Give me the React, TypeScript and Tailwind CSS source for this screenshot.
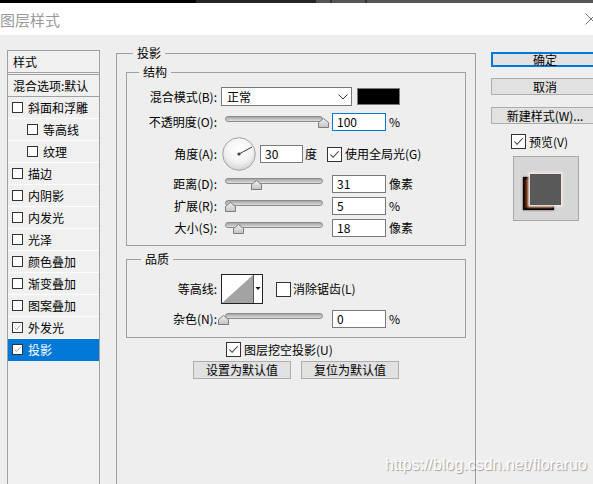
import type { ReactNode } from "react";

const items = [
  { label: "斜面和浮雕" },
  { label: "等高线", indent: true },
  { label: "纹理", indent: true },
  { label: "描边" },
  { label: "内阴影" },
  { label: "内发光" },
  { label: "光泽" },
  { label: "颜色叠加" },
  { label: "渐变叠加" },
  { label: "图案叠加" },
  { label: "外发光", checked: true },
  { label: "投影", checked: true, active: true },
];

function Tick({ color }: { color: string }) {
  return (
    <svg viewBox="0 0 14 14" className="w-full h-full">
      <path d="M2.5 7 L5.5 10 L11.5 3.5" fill="none" stroke={color} strokeWidth="1.1" />
    </svg>
  );
}

function SmallBox({ checked }: { checked?: boolean }) {
  return (
    <div className="w-[11px] h-[11px] shrink-0 bg-white border border-[#333]">
      {checked && <Tick color="#777" />}
    </div>
  );
}

function Box({ checked }: { checked?: boolean }) {
  return (
    <div className="w-[15px] h-[15px] shrink-0 bg-white border border-[#333]">
      {checked && <Tick color="#333" />}
    </div>
  );
}

function Row({ label, className, children }: { label: string; className: string; children: ReactNode }) {
  return (
    <div className={`flex items-center ${className}`}>
      <div className="w-[90px] mr-[4px] text-right whitespace-nowrap">{label}</div>
      {children}
    </div>
  );
}

function Slider({ pos }: { pos: number }) {
  return (
    <div className="relative w-[106px] h-[18px] shrink-0">
      <div className="absolute left-[4px] top-[3px] w-[98px] h-[6px] rounded-full border border-[#8c8c8c] bg-gradient-to-b from-[#a4a4a4] to-[#dedede]" />
      <svg className="absolute top-[5px]" style={{ left: pos }} width="11" height="10" viewBox="0 0 11 10">
        <defs>
          <linearGradient id="thumb" x1="0" y1="0" x2="0" y2="1">
            <stop offset="0%" stopColor="#f2f2f2" />
            <stop offset="100%" stopColor="#c2c2c2" />
          </linearGradient>
        </defs>
        <polygon points="5.5,0.5 10.5,4.5 10.5,9.5 0.5,9.5 0.5,4.5" fill="url(#thumb)" stroke="#7c7c7c" />
      </svg>
    </div>
  );
}

function Num({ value, focus, className }: { value: string; focus?: boolean; className: string }) {
  return (
    <div
      className={`h-[18px] bg-white border flex items-center pl-[4px] shrink-0 ${className} ${
        focus ? "border-[#0078d7]" : "border-[#7a7a7a]"
      }`}
    >
      {value}
    </div>
  );
}

function Dial() {
  return (
    <svg width="34" height="34" viewBox="0 0 34 34" className="ml-[1px] shrink-0">
      <defs>
        <radialGradient id="dial" cx="50%" cy="35%" r="65%">
          <stop offset="0%" stopColor="#ffffff" />
          <stop offset="65%" stopColor="#f1f1f1" />
          <stop offset="100%" stopColor="#d2d2d2" />
        </radialGradient>
      </defs>
      <circle cx="17" cy="17" r="16.3" fill="url(#dial)" stroke="#a2a2a2" />
      <line x1="17" y1="17" x2="30" y2="10" stroke="#3c3c3c" strokeWidth="1" />
      <circle cx="17" cy="17" r="1.6" fill="#3c3c3c" />
    </svg>
  );
}

function Contour() {
  return (
    <svg width="42" height="30" viewBox="0 0 42 30" className="shrink-0">
      <rect x="0.5" y="0.5" width="41" height="29" fill="#fff" stroke="#222" />
      <polygon points="1,29 32,1 32,29" fill="#a3a3a3" />
      <line x1="32.5" y1="1" x2="32.5" y2="29" stroke="#555" />
      <polygon points="34.5,13 39.5,13 37,16" fill="#111" />
    </svg>
  );
}

function Btn({ children, className }: { children: ReactNode; className: string }) {
  return (
    <div className={`bg-[#e1e1e1] border border-[#adadad] flex items-center justify-center shrink-0 ${className}`}>
      {children}
    </div>
  );
}

export default function App() {
  return (
    <div className="relative w-[593px] h-[484px] overflow-hidden flex flex-col bg-[#eeeeee] text-[12px] leading-[14px] text-black font-['Noto_Sans_CJK_SC','Microsoft_YaHei',sans-serif]">
      {/* window strip */}
      <div className="h-[3px] flex shrink-0">
        <div className="w-[196px] bg-black" />
        <div className="w-[120px] bg-[#252525]" />
        <div className="w-[14px] bg-[#555]" />
        <div className="w-[2px] bg-[#333]" />
        <div className="w-[33px] bg-[#555]" />
        <div className="w-[2px] bg-[#333]" />
        <div className="flex-1 bg-[#555]" />
      </div>

      {/* title bar */}
      <div className="h-[32px] bg-white flex items-center justify-between shrink-0">
        <span className="text-[15px] leading-none text-[#9a9a9a]">图层样式</span>
        <svg width="12" height="12" viewBox="0 0 12 12" className="-mr-[4px]">
          <path d="M0.5 0.5 L11.5 11.5 M11.5 0.5 L0.5 11.5" stroke="#777" strokeWidth="1" />
        </svg>
      </div>

      {/* body */}
      <div className="flex items-start pl-[7px] flex-1">
        {/* left list */}
        <div className="mt-[15px] w-[93px] h-[460px] shrink-0 border border-[#a0a0a0] bg-[#f0f0f0]">
          <div className="h-[24px] border-b-[3px] border-double border-[#a0a0a0] flex items-center pl-[5px]">样式</div>
          <div className="h-[22px] border-b border-[#a0a0a0] flex items-center pl-[5px] whitespace-nowrap">混合选项:默认</div>
          {items.map((it) => (
            <div
              key={it.label}
              className={`h-[22px] border-b flex items-center gap-[5px] ${it.indent ? "pl-[19px]" : "pl-[4px]"} ${
                it.active ? "bg-[#0078d7] text-white border-[#0078d7]" : "border-white"
              }`}
            >
              <SmallBox checked={it.checked} />
              <span>{it.label}</span>
            </div>
          ))}
        </div>

        {/* drop shadow settings */}
        <fieldset className="ml-[16px] mt-[10px] w-[360px] h-[470px] shrink-0 min-w-0 border border-[#a0a0a0]">
          <legend className="ml-[16px] px-[4px] leading-[16px]">投影</legend>
          <div className="px-[9px]">
            <fieldset className="mt-[3px] min-w-0 border border-[#a0a0a0] pb-[8px]">
              <legend className="ml-[12px] px-[4px] leading-[16px]">结构</legend>
              <Row label="混合模式(B):" className="h-[19px] mt-[7px]">
                <div className="w-[131px] h-[19px] bg-white border border-[#7a7a7a] flex items-center justify-between pl-[5px] pr-[3px] shrink-0">
                  <span>正常</span>
                  <svg width="10" height="6" viewBox="0 0 10 6">
                    <path d="M0.5 0.5 L5 5 L9.5 0.5" fill="none" stroke="#333" />
                  </svg>
                </div>
                <div className="ml-[5px] w-[43px] h-[17px] bg-black border border-[#7a7a7a] shrink-0" />
              </Row>
              <Row label="不透明度(O):" className="h-[18px] mt-[7px]">
                <Slider pos={97} />
                <Num value="100" focus className="ml-[5px] w-[54px]" />
                <span className="ml-[3px]">%</span>
              </Row>
              <Row label="角度(A):" className="h-[34px] mt-[6px]">
                <Dial />
                <Num value="30" className="ml-[4px] w-[43px]" />
                <span className="ml-[2px]">度</span>
                <div className="ml-[10px]">
                  <Box checked />
                </div>
                <span className="ml-[3px] whitespace-nowrap">使用全局光(G)</span>
              </Row>
              <Row label="距离(D):" className="h-[18px] mt-[4px]">
                <Slider pos={30} />
                <Num value="31" className="ml-[5px] w-[54px]" />
                <span className="ml-[3px]">像素</span>
              </Row>
              <Row label="扩展(R):" className="h-[18px] mt-[4px]">
                <Slider pos={4} />
                <Num value="5" className="ml-[5px] w-[54px]" />
                <span className="ml-[3px]">%</span>
              </Row>
              <Row label="大小(S):" className="h-[18px] mt-[4px]">
                <Slider pos={12} />
                <Num value="18" className="ml-[5px] w-[54px]" />
                <span className="ml-[3px]">像素</span>
              </Row>
            </fieldset>

            <fieldset className="mt-[5px] min-w-0 border border-[#a0a0a0] pb-[9px]">
              <legend className="ml-[14px] px-[4px] leading-[16px]">品质</legend>
              <Row label="等高线:" className="h-[30px] mt-[7px]">
                <Contour />
                <div className="ml-[13px]">
                  <Box />
                </div>
                <span className="ml-[2px] whitespace-nowrap">消除锯齿(L)</span>
              </Row>
              <Row label="杂色(N):" className="h-[18px] mt-[6px]">
                <Slider pos={-3} />
                <Num value="0" className="ml-[5px] w-[54px]" />
                <span className="ml-[3px]">%</span>
              </Row>
            </fieldset>

            <div className="mt-[4px] ml-[100px] h-[15px] flex items-center">
              <Box checked />
              <span className="ml-[3px] whitespace-nowrap">图层挖空投影(U)</span>
            </div>
            <div className="mt-[4px] ml-[67px] flex gap-[10px]">
              <Btn className="w-[98px] h-[18px]">设置为默认值</Btn>
              <Btn className="w-[98px] h-[18px]">复位为默认值</Btn>
            </div>
          </div>
        </fieldset>

        {/* buttons column */}
        <div className="ml-[15px] mt-[17px] w-[108px] shrink-0 flex flex-col">
          <div className="h-[15px] bg-[#e1e1e1] border-2 border-[#0078d7] flex items-center justify-center">确定</div>
          <Btn className="mt-[11px] h-[17px]">取消</Btn>
          <Btn className="mt-[12px] h-[17px] whitespace-nowrap">新建样式(W)...</Btn>
          <div className="mt-[10px] ml-[20px] h-[15px] flex items-center">
            <Box checked />
            <span className="ml-[3px]">预览(V)</span>
          </div>
          <div className="mt-[7px] ml-[22px] relative w-[66px] h-[65px] bg-[#d6d6d6] border border-[#a8a8a8]">
            <div className="absolute left-[9px] top-[20px] w-[31px] h-[33px] bg-[#6e2b0f] shadow-[inset_0_0_2px_2px_rgba(0,0,0,0.9),0_0_2px_rgba(0,0,0,0.7)]" />
            <div className="absolute left-[16px] top-[17px] w-[31px] h-[31px] bg-[#595959] shadow-[0_0_2px_2px_#efe6de]" />
          </div>
        </div>
      </div>

      {/* watermark */}
      <div className="absolute left-[385px] bottom-[11px] text-[16px] leading-none text-white font-['Liberation_Sans',Arial,sans-serif] [text-shadow:1px_1px_1px_rgba(0,0,0,0.35)]">
        https://blog.csdn.net/floraruo
      </div>
    </div>
  );
}
